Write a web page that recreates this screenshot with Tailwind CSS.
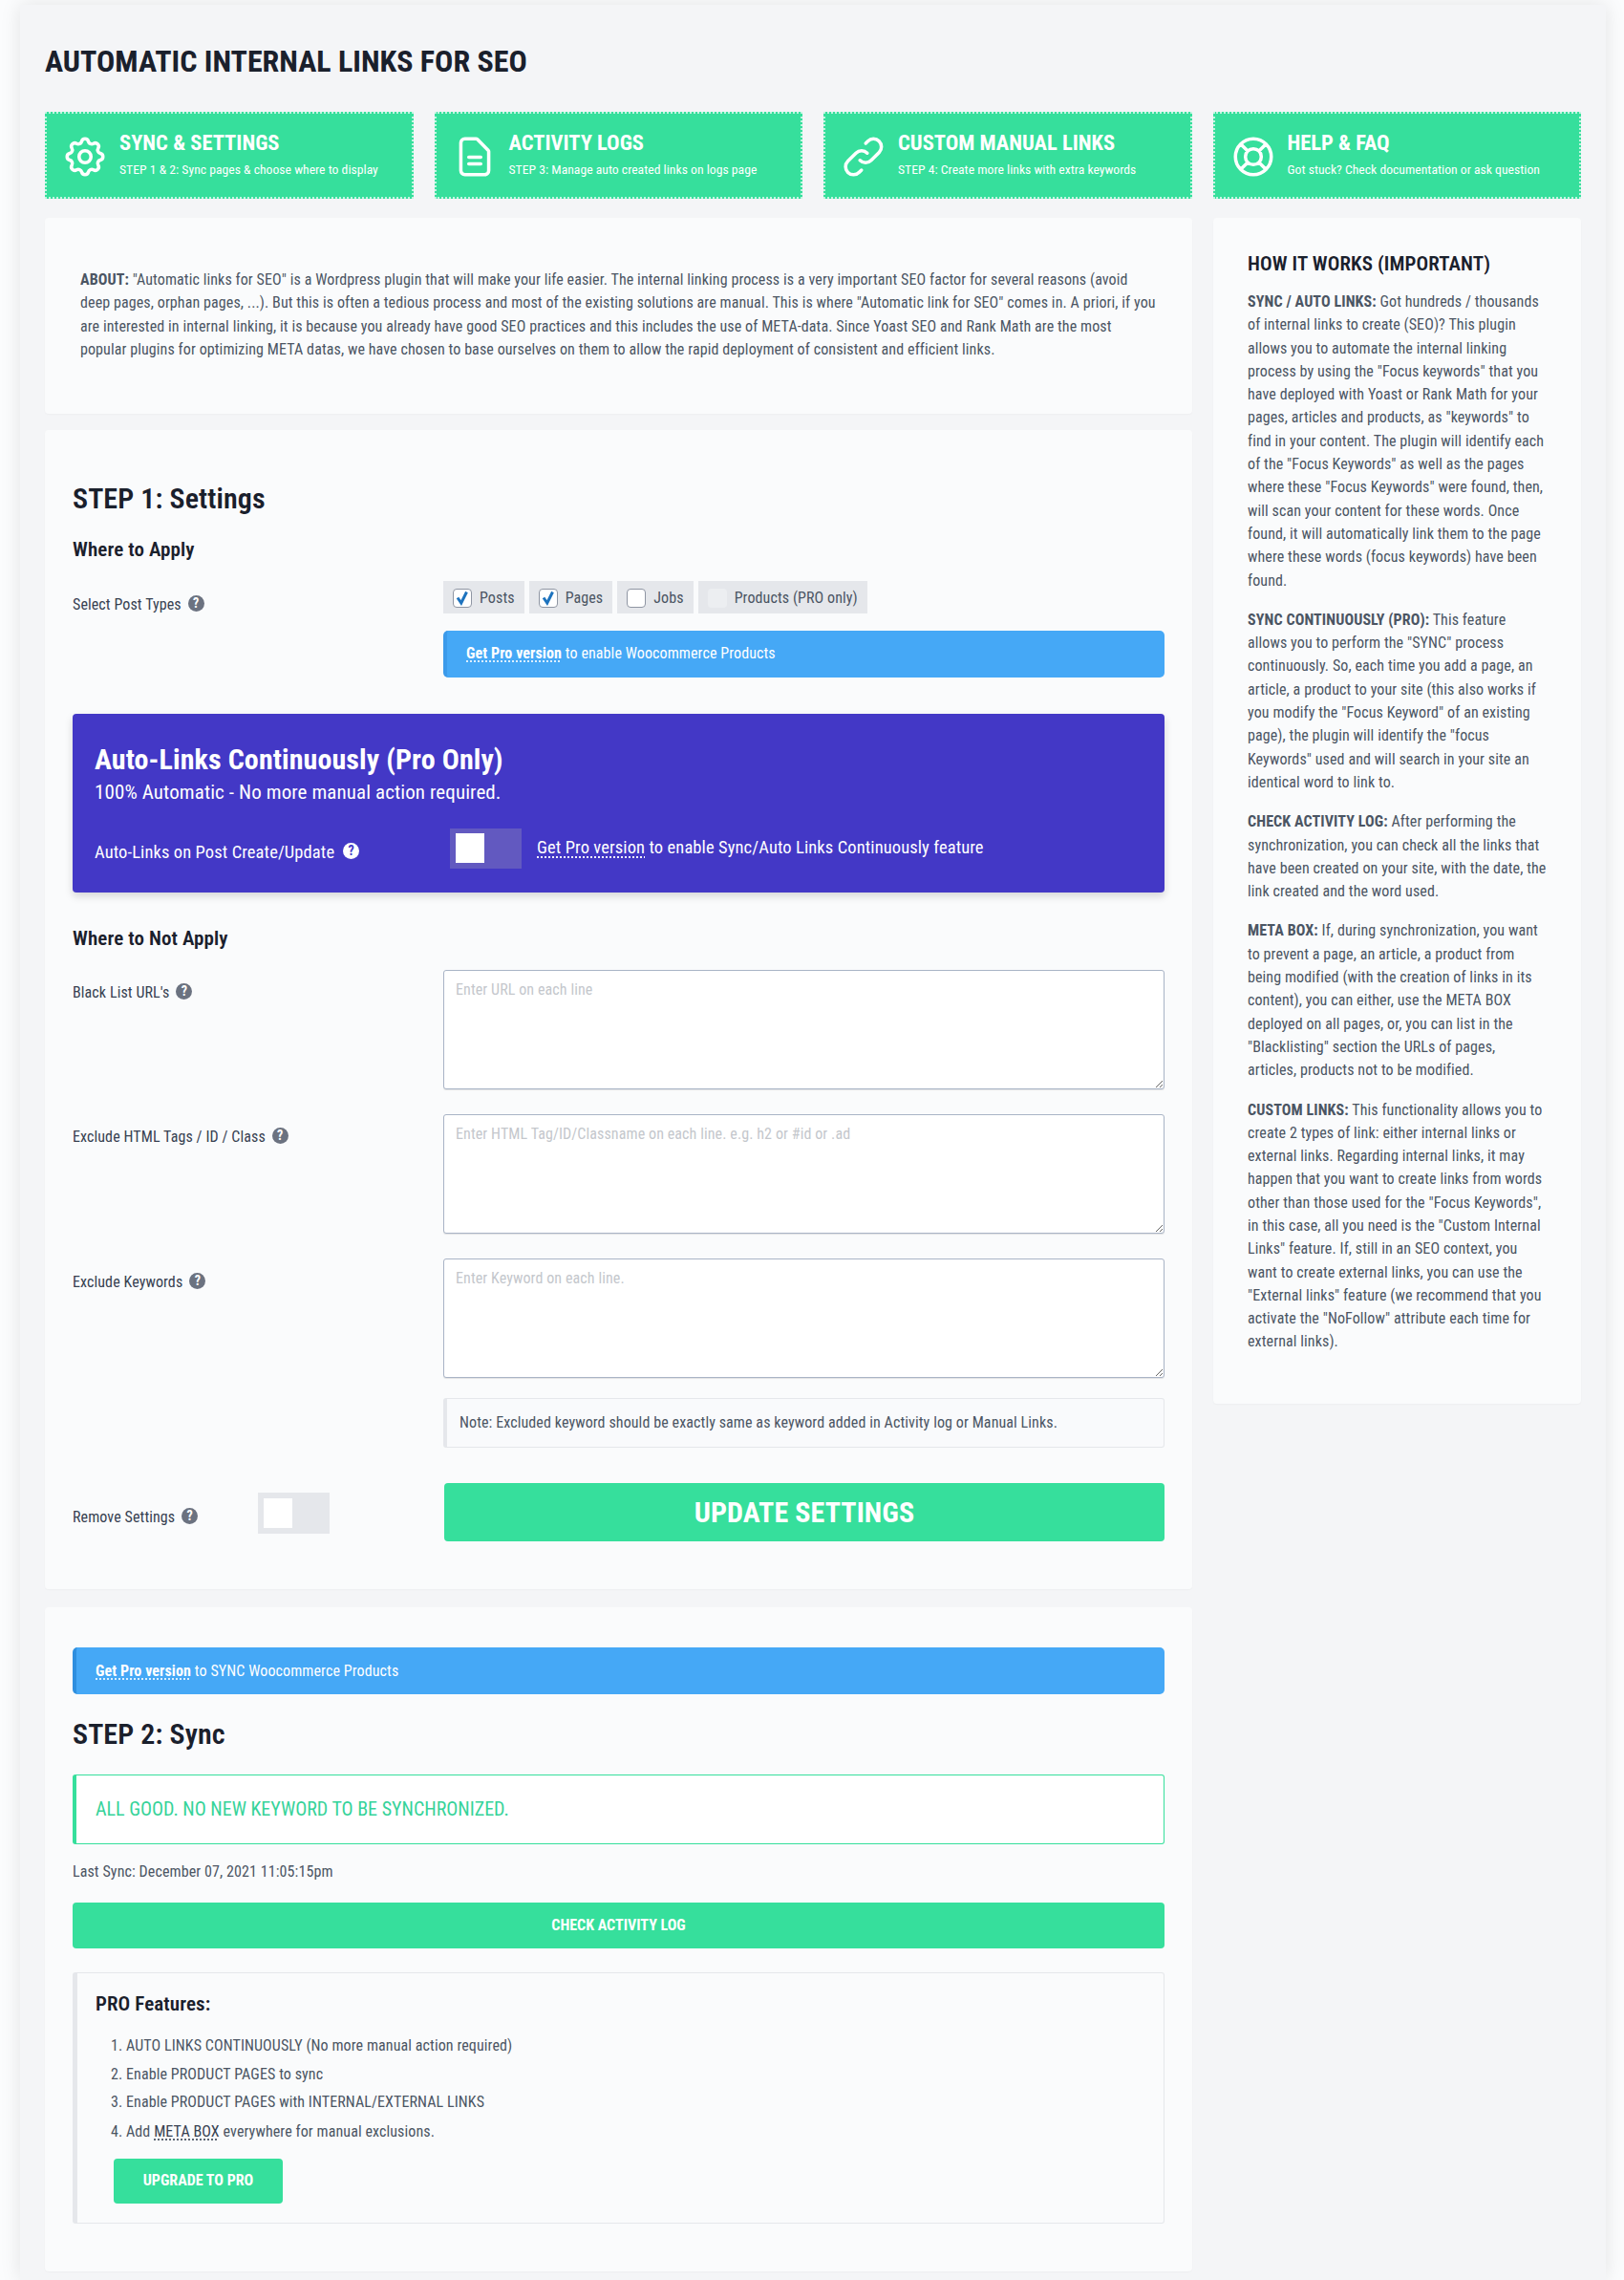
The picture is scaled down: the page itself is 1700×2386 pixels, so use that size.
<!doctype html>
<html><head><meta charset="utf-8"><title>Automatic Internal Links for SEO</title><script src="https://cdn.jsdelivr.net/npm/@tailwindcss/browser@4"></script></head>
<body class="bg-[#fbfcfd] text-[#4b5563] font-['Roboto',sans-serif] font-stretch-[75%] text-[16px] leading-[24.3px] tracking-[0.1px]">
<div class="ml-[21px] mt-[5px] w-[1660px] bg-[#f4f5f7] px-[26px] pt-[41px] pb-[9px] shadow-[0_0_20px_rgba(0,0,0,0.10)]">
  <h1 class="text-[32px] leading-[36px] font-bold uppercase tracking-normal text-[#1a202c] mb-[35px]">Automatic Internal Links for SEO</h1>

  <div class="grid grid-cols-4 gap-[22px] mb-[20px]">
    <a class="flex items-center h-[91px] bg-[#36df9c] border-2 border-dotted border-white/70 pl-[15px] text-white">
      <svg class="w-[50px] h-[50px] shrink-0 mt-[2px]" viewBox="0 0 24 24" fill="none" stroke="white" stroke-width="1.7" stroke-linecap="round" stroke-linejoin="round"><path d="M10.325 4.317c.426-1.756 2.924-1.756 3.35 0a1.724 1.724 0 002.573 1.066c1.543-.94 3.31.826 2.37 2.37a1.724 1.724 0 001.065 2.572c1.756.426 1.756 2.924 0 3.35a1.724 1.724 0 00-1.066 2.573c.94 1.543-.826 3.31-2.37 2.37a1.724 1.724 0 00-2.572 1.065c-.426 1.756-2.924 1.756-3.35 0a1.724 1.724 0 00-2.573-1.066c-1.543.94-3.31-.826-2.37-2.37a1.724 1.724 0 00-1.065-2.572c-1.756-.426-1.756-2.924 0-3.35a1.724 1.724 0 001.066-2.573c-.94-1.543.826-3.31 2.37-2.37.996.608 2.296.07 2.572-1.065z"/><circle cx="12" cy="12" r="3"/></svg>
      <div class="ml-[11px] pb-[3px]"><div class="text-[22.5px] leading-[28px] font-bold uppercase tracking-normal">Sync &amp; Settings</div><div class="text-[13.7px] leading-[20px] mt-[4px] tracking-normal">STEP 1 &amp; 2: Sync pages &amp; choose where to display</div></div>
    </a>
    <a class="flex items-center h-[91px] bg-[#36df9c] border-2 border-dotted border-white/70 pl-[15px] text-white">
      <svg class="w-[50px] h-[50px] shrink-0 mt-[2px]" viewBox="0 0 24 24" fill="none" stroke="white" stroke-width="1.7" stroke-linecap="round" stroke-linejoin="round"><path d="M7 21h10a2 2 0 002-2V9.414a1 1 0 00-.293-.707l-5.414-5.414A1 1 0 0012.586 3H7a2 2 0 00-2 2v14a2 2 0 002 2z"/><path d="M9 12.2h6M9 15.6h6"/></svg>
      <div class="ml-[11px] pb-[3px]"><div class="text-[22.5px] leading-[28px] font-bold uppercase tracking-normal">Activity Logs</div><div class="text-[13.7px] leading-[20px] mt-[4px] tracking-normal">STEP 3: Manage auto created links on logs page</div></div>
    </a>
    <a class="flex items-center h-[91px] bg-[#36df9c] border-2 border-dotted border-white/70 pl-[15px] text-white">
      <svg class="w-[50px] h-[50px] shrink-0 mt-[2px]" viewBox="0 0 24 24" fill="none" stroke="white" stroke-width="1.7" stroke-linecap="round" stroke-linejoin="round"><path d="M13.828 10.172a4 4 0 00-5.656 0l-4 4a4 4 0 105.656 5.656l1.102-1.101m-.758-4.899a4 4 0 005.656 0l4-4a4 4 0 00-5.656-5.656l-1.1 1.1"/></svg>
      <div class="ml-[11px] pb-[3px]"><div class="text-[22.5px] leading-[28px] font-bold uppercase tracking-normal">Custom Manual Links</div><div class="text-[13.7px] leading-[20px] mt-[4px] tracking-normal">STEP 4: Create more links with extra keywords</div></div>
    </a>
    <a class="flex items-center h-[91px] bg-[#36df9c] border-2 border-dotted border-white/70 pl-[15px] text-white">
      <svg class="w-[50px] h-[50px] shrink-0 mt-[2px]" viewBox="0 0 24 24" fill="none" stroke="white" stroke-width="1.7" stroke-linecap="round" stroke-linejoin="round"><path d="M18.364 5.636l-3.536 3.536m0 5.656l3.536 3.536M9.172 9.172L5.636 5.636m3.536 9.192l-3.536 3.536M21 12a9 9 0 11-18 0 9 9 0 0118 0zm-5 0a4 4 0 11-8 0 4 4 0 018 0z"/></svg>
      <div class="ml-[11px] pb-[3px]"><div class="text-[22.5px] leading-[28px] font-bold uppercase tracking-normal">Help &amp; FAQ</div><div class="text-[13.7px] leading-[20px] mt-[4px] tracking-normal">Got stuck? Check documentation or ask question</div></div>
    </a>
  </div>

  <div class="flex gap-[22px] items-start">
    <div class="w-[1201px] shrink-0">
      <section class="bg-[#fafbfc] rounded-[4px] pl-[37px] pr-[36px] pt-[53px] pb-[55px] shadow-[0_1px_2px_rgba(0,0,0,0.03)]">
        <p><b class="font-bold">ABOUT:</b> "Automatic links for SEO" is a Wordpress plugin that will make your life easier. The internal linking process is a very important SEO factor for several reasons (avoid deep pages, orphan pages, ...). But this is often a tedious process and most of the existing solutions are manual. This is where "Automatic link for SEO" comes in. A priori, if you are interested in internal linking, it is because you already have good SEO practices and this includes the use of META-data. Since Yoast SEO and Rank Math are the most popular plugins for optimizing META datas, we have chosen to base ourselves on them to allow the rapid deployment of consistent and efficient links.</p>
      </section>

      <section class="mt-[17px] bg-[#fafbfc] rounded-[4px] px-[29px] pt-[54px] pb-[50px] shadow-[0_1px_2px_rgba(0,0,0,0.03)]">
        <h2 class="text-[30px] leading-[36px] font-semibold text-[#1a202c]">STEP 1: Settings</h2>
        <h3 class="mt-[21px] text-[21px] leading-[28px] font-semibold text-[#1a202c]">Where to Apply</h3>

        <div class="flex mt-[19px]">
          <div class="w-[388px] shrink-0 flex items-center h-[24px] mt-[13px]"><span class="text-[#374151]">Select Post Types</span><span class="ml-[7px] w-[17px] h-[17px] rounded-full bg-[#6b7280] text-white text-[14px] leading-[17px] font-bold text-center -mt-[3px]">?</span></div>
          <div class="flex-1">
            <div class="flex gap-[5px]">
              <label class="h-[34px] pl-[10px] pr-[10px] pt-[1px] bg-[#e5e7eb] flex items-center gap-[8px]"><span class="w-[20px] h-[20px] bg-white border border-[#8f96a3] rounded-[4px] flex items-center justify-center"><svg class="w-[18px] h-[18px]" viewBox="0 0 18 18" fill="none" stroke="#1e73be" stroke-width="3"><path d="M4 8.5l3.8 5.5L13.5 2.5"/></svg></span>Posts</label>
              <label class="h-[34px] pl-[10px] pr-[10px] pt-[1px] bg-[#e5e7eb] flex items-center gap-[8px]"><span class="w-[20px] h-[20px] bg-white border border-[#8f96a3] rounded-[4px] flex items-center justify-center"><svg class="w-[18px] h-[18px]" viewBox="0 0 18 18" fill="none" stroke="#1e73be" stroke-width="3"><path d="M4 8.5l3.8 5.5L13.5 2.5"/></svg></span>Pages</label>
              <label class="h-[34px] pl-[10px] pr-[10px] pt-[1px] bg-[#e5e7eb] flex items-center gap-[8px]"><span class="w-[20px] h-[20px] bg-white border border-[#8f96a3] rounded-[4px]"></span>Jobs</label>
              <label class="h-[34px] pl-[10px] pr-[10px] pt-[1px] bg-[#e5e7eb] flex items-center gap-[8px]"><span class="w-[20px] h-[20px] bg-[#eceef1] rounded-[4px]"></span>Products (PRO only)</label>
            </div>
            <div class="mt-[18px] h-[49px] rounded-[5px] bg-[#45a8f6] border-l-[4px] border-[#3b9aea] pl-[20px] pb-[2px] flex items-center text-white"><span><a class="font-bold underline decoration-dotted underline-offset-3">Get Pro version</a> to enable Woocommerce Products</span></div>
          </div>
        </div>

        <div class="mt-[38px] h-[187px] rounded-[4px] bg-[#4338c6] px-[23px] pt-[28px] text-white shadow-[0_4px_8px_rgba(0,0,0,0.15)]">
          <div class="text-[30px] leading-[40px] font-bold">Auto-Links Continuously (Pro Only)</div>
          <div class="text-[21px] leading-[28px]">100% Automatic - No more manual action required.</div>
          <div class="flex mt-[24px]">
            <div class="w-[372px] shrink-0 flex items-center mt-[13px] h-[24px] text-[18.5px]"><span>Auto-Links on Post Create/Update</span><span class="ml-[9px] w-[17px] h-[17px] rounded-full bg-white text-[#4338c6] text-[14px] leading-[17px] font-bold text-center -mt-[3px]">?</span></div>
            <div class="w-[75px] h-[42px] bg-[#6259c0] pl-[6px] pt-[5px] shrink-0"><div class="w-[30px] h-[31px] bg-white"></div></div>
            <div class="ml-[16px] text-[18.5px] leading-[24px] mt-[8px]"><a class="underline decoration-dotted underline-offset-3">Get Pro version</a> to enable Sync/Auto Links Continuously feature</div>
          </div>
        </div>

        <h3 class="mt-[34px] text-[21px] leading-[28px] font-semibold text-[#1a202c]">Where to Not Apply</h3>

        <div class="flex mt-[19px]">
          <div class="w-[388px] shrink-0 flex items-start mt-[12px]"><span class="text-[#374151]">Black List URL's</span><span class="ml-[7px] w-[17px] h-[17px] rounded-full bg-[#6b7280] text-white text-[14px] leading-[17px] font-bold text-center mt-[2px]">?</span></div>
          <textarea class="flex-1 h-[125px] bg-white border border-[#a9b4c6] rounded-[3px] px-[12px] py-[8px] placeholder:text-[#c4c7cc] shadow-[0_1px_1px_rgba(0,0,0,0.1)]" placeholder="Enter URL on each line"></textarea>
        </div>
        <div class="flex mt-[26px]">
          <div class="w-[388px] shrink-0 flex items-start mt-[12px]"><span class="text-[#374151]">Exclude HTML Tags / ID / Class</span><span class="ml-[7px] w-[17px] h-[17px] rounded-full bg-[#6b7280] text-white text-[14px] leading-[17px] font-bold text-center mt-[2px]">?</span></div>
          <textarea class="flex-1 h-[125px] bg-white border border-[#a9b4c6] rounded-[3px] px-[12px] py-[8px] placeholder:text-[#c4c7cc] shadow-[0_1px_1px_rgba(0,0,0,0.1)]" placeholder="Enter HTML Tag/ID/Classname on each line. e.g. h2 or #id or .ad"></textarea>
        </div>
        <div class="flex mt-[26px]">
          <div class="w-[388px] shrink-0 flex items-start mt-[13px]"><span class="text-[#374151]">Exclude Keywords</span><span class="ml-[7px] w-[17px] h-[17px] rounded-full bg-[#6b7280] text-white text-[14px] leading-[17px] font-bold text-center mt-[2px]">?</span></div>
          <textarea class="flex-1 h-[125px] bg-white border border-[#a9b4c6] rounded-[3px] px-[12px] py-[8px] placeholder:text-[#c4c7cc] shadow-[0_1px_1px_rgba(0,0,0,0.1)]" placeholder="Enter Keyword on each line."></textarea>
        </div>
        <div class="ml-[388px] mt-[21px] h-[52px] bg-[#f9fafc] border border-[#e5e7eb] border-l-[4px] rounded-[3px] pl-[13px] flex items-center">Note: Excluded keyword should be exactly same as keyword added in Activity log or Manual Links.</div>

        <div class="flex mt-[37px]">
          <div class="w-[194px] shrink-0 flex items-center mt-[24px] h-[24px]"><span class="text-[#374151]">Remove Settings</span><span class="ml-[7px] w-[17px] h-[17px] rounded-full bg-[#6b7280] text-white text-[14px] leading-[17px] font-bold text-center -mt-[3px]">?</span></div>
          <div class="w-[75px] h-[43px] bg-[#e5e7eb] mt-[10px] pl-[6px] pt-[6px] shrink-0"><div class="w-[30px] h-[31px] bg-white"></div></div>
          <button class="ml-[120px] flex-1 h-[61px] rounded-[4px] bg-[#36df9c] text-white text-[30px] font-bold uppercase">Update Settings</button>
        </div>
      </section>

      <section class="mt-[19px] bg-[#fafbfc] rounded-[4px] px-[29px] pt-[42px] pb-[50px] shadow-[0_1px_2px_rgba(0,0,0,0.03)]">
        <div class="h-[49px] rounded-[5px] bg-[#45a8f6] border-l-[4px] border-[#2f8fdf] pl-[20px] flex items-center text-white"><span><a class="font-bold underline decoration-dotted underline-offset-3">Get Pro version</a> to SYNC Woocommerce Products</span></div>
        <h2 class="mt-[24px] text-[30px] leading-[36px] font-semibold text-[#1a202c]">STEP 2: Sync</h2>
        <div class="mt-[24px] h-[73px] bg-white border border-[#36df9c] border-l-[4px] rounded-[3px] pl-[20px] pb-[2px] flex items-center text-[20px] uppercase tracking-normal text-[#36d399]">All good. No new keyword to be synchronized.</div>
        <p class="mt-[17px] leading-[24px]">Last Sync: December 07, 2021 11:05:15pm</p>
        <a class="mt-[20px] h-[48px] rounded-[4px] bg-[#36df9c] flex items-center justify-center text-white font-bold uppercase tracking-normal">Check Activity Log</a>
        <div class="mt-[25px] h-[263px] border border-[#e5e7eb] border-l-[5px] rounded-[3px] px-[19px] pt-[18px]">
          <div class="text-[21px] leading-[28px] font-semibold text-[#1a202c]">PRO Features:</div>
          <ol class="mt-[18px] ml-[32px] list-decimal">
            <li class="mb-[5.5px] leading-[24px]">AUTO LINKS CONTINUOUSLY (No more manual action required)</li>
            <li class="mb-[5.5px] leading-[24px]">Enable PRODUCT PAGES to sync</li>
            <li class="mb-[6.5px] leading-[24px]">Enable PRODUCT PAGES with INTERNAL/EXTERNAL LINKS</li>
            <li class="leading-[24px]">Add <a class="text-[#374151] underline decoration-dotted underline-offset-3">META BOX</a> everywhere for manual exclusions.</li>
          </ol>
          <a class="mt-[16px] ml-[19px] w-[177px] h-[47px] rounded-[4px] bg-[#36df9c] flex items-center justify-center text-white font-bold uppercase tracking-normal">Upgrade to Pro</a>
        </div>
      </section>
    </div>

    <aside class="w-[385px] shrink-0 bg-[#fafbfc] rounded-[4px] pl-[36px] pr-[36px] pt-[34px] pb-[52px] shadow-[0_1px_2px_rgba(0,0,0,0.03)]">
      <h3 class="text-[21px] leading-[28px] font-semibold uppercase text-[#1a202c] mb-[14px]">How it works (Important)</h3>
      <p class="mb-[17px]"><b class="font-bold">SYNC / AUTO LINKS:</b> Got hundreds / thousands of internal links to create (SEO)? This plugin allows you to automate the internal linking process by using the "Focus keywords" that you have deployed with Yoast or Rank Math for your pages, articles and products, as "keywords" to find in your content. The plugin will identify each of the "Focus Keywords" as well as the pages where these "Focus Keywords" were found, then, will scan your content for these words. Once found, it will automatically link them to the page where these words (focus keywords) have been found.</p>
      <p class="mb-[17px]"><b class="font-bold">SYNC CONTINUOUSLY (PRO):</b> This feature allows you to perform the "SYNC" process continuously. So, each time you add a page, an article, a product to your site (this also works if you modify the "Focus Keyword" of an existing page), the plugin will identify the "focus Keywords" used and will search in your site an identical word to link to.</p>
      <p class="mb-[17px]"><b class="font-bold">CHECK ACTIVITY LOG:</b> After performing the synchronization, you can check all the links that have been created on your site, with the date, the link created and the word used.</p>
      <p class="mb-[17px]"><b class="font-bold">META BOX:</b> If, during synchronization, you want to prevent a page, an article, a product from being modified (with the creation of links in its content), you can either, use the META BOX deployed on all pages, or, you can list in the "Blacklisting" section the URLs of pages, articles, products not to be modified.</p>
      <p><b class="font-bold">CUSTOM LINKS:</b> This functionality allows you to create 2 types of link: either internal links or external links. Regarding internal links, it may happen that you want to create links from words other than those used for the "Focus Keywords", in this case, all you need is the "Custom Internal Links" feature. If, still in an SEO context, you want to create external links, you can use the "External links" feature (we recommend that you activate the "NoFollow" attribute each time for external links).</p>
    </aside>
  </div>
</div>
</body></html>
